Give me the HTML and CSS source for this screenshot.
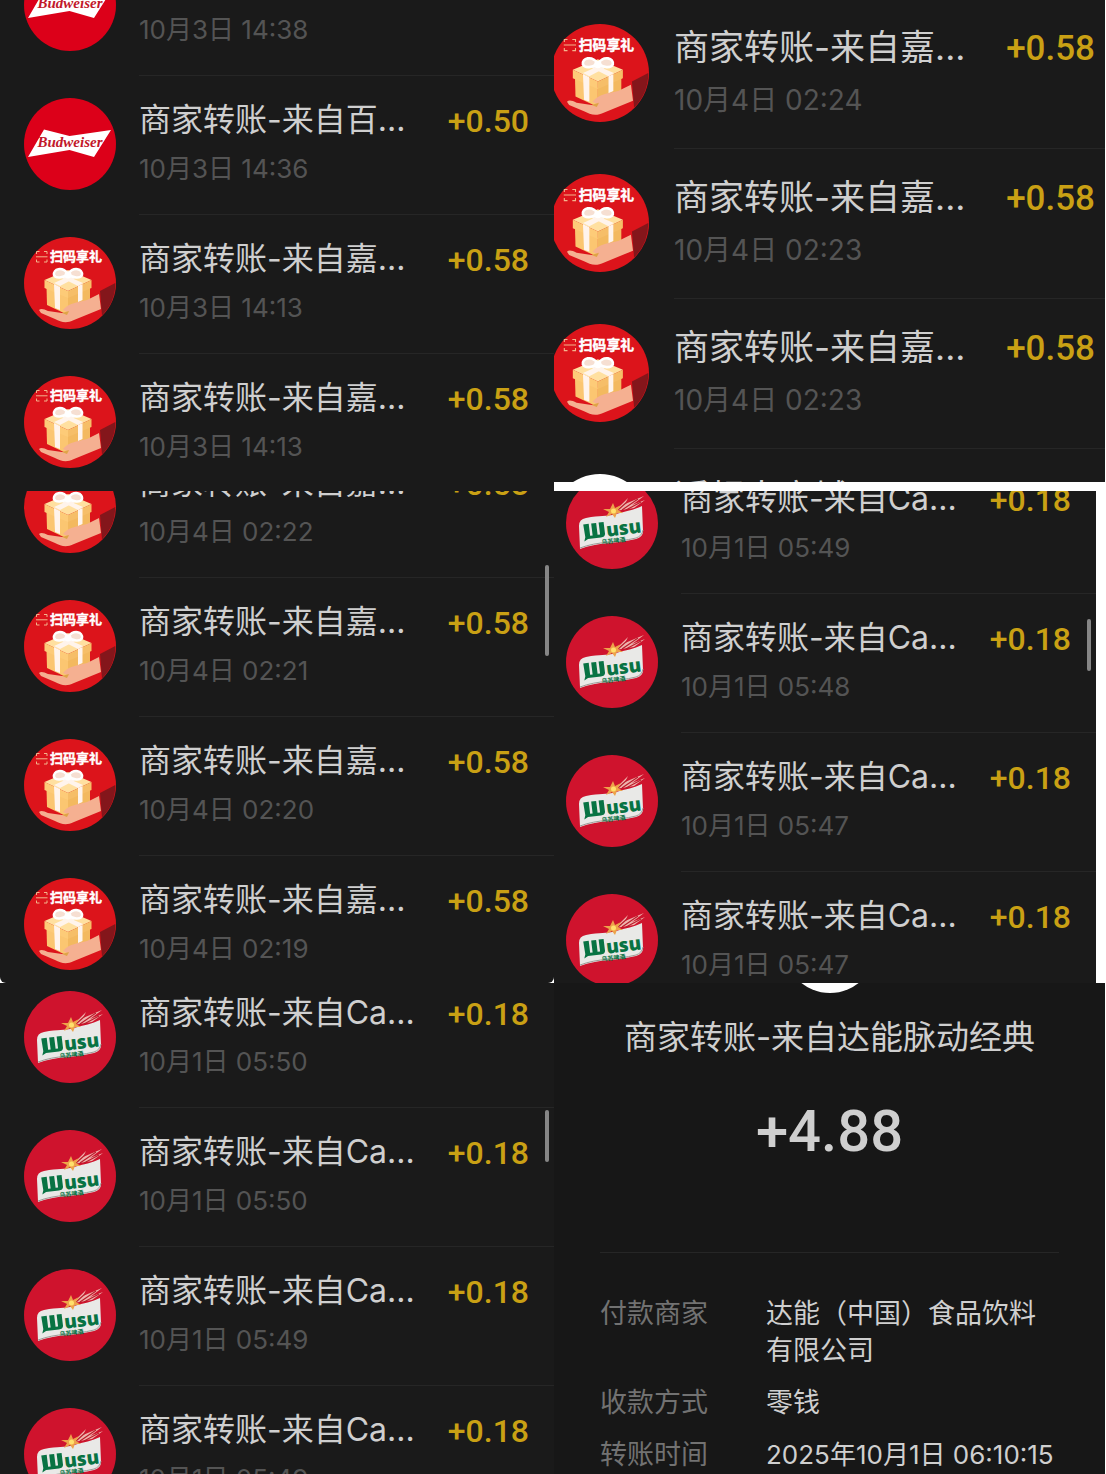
FILE: index.html
```
<!DOCTYPE html>
<html lang="zh-CN">
<head>
<meta charset="utf-8">
<meta name="viewport" content="width=device-width, initial-scale=1">
<title>零钱明细</title>
<link rel="stylesheet" href="styles.css">
</head>
<body>
<svg class="sprite" aria-hidden="true">
  <symbol id="bud" viewBox="0 0 92 92">
    <circle cx="46" cy="46" r="46" fill="#dc0019"/>
    <path d="M4 59 L20 31.500 L45.500 38 L87 32 L70 59 L45.500 52 Z" fill="#fff"/>
    <text class="bud-word" x="46" y="49" text-anchor="middle">Budweiser</text>
  </symbol>
  <symbol id="gift" viewBox="0 0 92 92">
    <circle cx="46" cy="46" r="46" fill="#dc141b"/>
    <path d="M76 54 L91.300 46 A46 46 0 0 1 78 78.500 Z" fill="#84161b"/>
    <path d="M12.500 17V14.500H15.500 M20 14.500H23V17 M12.500 22.500V25H15.500 M20 25H23V22.500 M12 19.800H23.500" fill="none" stroke="#f3b48c" stroke-width="1"/>
    <text class="gift-word" x="52" y="24" text-anchor="middle">扫码享礼</text>
    <path d="M22.500 50 L44 60 V78 L23 68 Z" fill="#fbc671"/>
    <path d="M44 60 L66 50 V67 L44 78 Z" fill="#f3b95f"/>
    <path d="M20.500 43 L44 33 L67.500 43 L44 54 Z" fill="#ffe0a0"/>
    <path d="M20.500 43 L44 54 V61 L20.500 51 Z" fill="#fdcb78"/>
    <path d="M67.500 43 L44 54 V61 L67.500 51 Z" fill="#f6be68"/>
    <path d="M30 47 L36 50 V73 L31 71 Z M54 49 L58.500 47 V63 L54 65 Z" fill="#fff4ec"/>
    <path d="M30 46 L50 37 L55 39 L36 49 Z M34 39 L38 37 L59 46 L54 49 Z" fill="#fff4ec"/>
    <path d="M44 37 C38 29 29 32 30 38 C32 42 39 41 44 37 C50 29 59 32 58 38 C56 42 49 41 44 37 Z" fill="#f6dfd2" stroke="#fff" stroke-width="2.500"/>
    <circle cx="44" cy="38" r="3.500" fill="#fff"/>
    <path d="M15 73 C17 71 20 72 24 74 L38 76 L45 76 L39 73 C44 66 55 65 63 63 L75 57 L77 72 L50 83 C42 87 37 85 31 82 L17 76 Z" fill="#f5b091"/>
    <path d="M38 76 L45 74 L43 78 Z" fill="#dfa447"/>
  </symbol>
  <symbol id="wusu" viewBox="0 0 92 92">
    <circle cx="46" cy="46" r="46" fill="#cf132d"/>
    <path d="M49 34 L62 21 L59 27 L78 19 L66 28 L79 23 L68 31 Z" fill="#efb4ae"/>
    <path d="M52 33 L61 25 M56 33 L72 22 M60 33 L75 25" stroke="#b91d2b" stroke-width="1.200"/>
    <path d="M14 72 L13 49 Q13 42 20 41 C35 38 39 40 50 37 C60 34 68 33 76 29 L77 54 Q77 60 70 62 C50 67 32 65 14 72 Z" fill="#e9e9e7"/>
    <path d="M14 71 C32 64 50 66 70 61 Q76 59 77 53" fill="none" stroke="#9c9c98" stroke-width="1"/>
    <path d="M47 26 L49 31 L55 28 L52 33 L57 36 L51 36 L49 41 L46 37 L40 40 L43 35 L37 32 L44 32 Z" fill="#eda34a"/>
    <circle cx="47.500" cy="34" r="2.500" fill="#ffe06c"/>
    <g transform="rotate(-7 46 52)">
      <path d="M18 44H23.500V56H26V44H31V56H33.500V44H38.500V56Q38 59 34 59H21L17 61L18.500 57Z" fill="#087343"/>
      <text class="wusu-word" x="40" y="59">usu</text>
      <text class="wusu-small" x="46" y="66" text-anchor="middle">乌苏啤酒</text>
    </g>
  </symbol>
</svg>

<main class="collage">
  <section class="panel">
    <ul class="list list-oct3">
      <li class="row"><svg class="avatar"><use href="#bud"/></svg><div class="entry"><div class="info"><p class="name">商家转账-来自百...</p><time class="date">10月3日 14:38</time></div><span class="amount">+0.50</span></div></li>
      <li class="row"><svg class="avatar"><use href="#bud"/></svg><div class="entry"><div class="info"><p class="name">商家转账-来自百...</p><time class="date">10月3日 14:36</time></div><span class="amount">+0.50</span></div></li>
      <li class="row"><svg class="avatar"><use href="#gift"/></svg><div class="entry"><div class="info"><p class="name">商家转账-来自嘉...</p><time class="date">10月3日 14:13</time></div><span class="amount">+0.58</span></div></li>
      <li class="row"><svg class="avatar"><use href="#gift"/></svg><div class="entry"><div class="info"><p class="name">商家转账-来自嘉...</p><time class="date">10月3日 14:13</time></div><span class="amount">+0.58</span></div></li>
    </ul>
  </section>

  <section class="panel panel-footed">
    <ul class="list list-large">
      <li class="row"><svg class="avatar"><use href="#gift"/></svg><div class="entry"><div class="info"><p class="name">商家转账-来自嘉...</p><time class="date">10月4日 02:24</time></div><span class="amount">+0.58</span></div></li>
      <li class="row"><svg class="avatar"><use href="#gift"/></svg><div class="entry"><div class="info"><p class="name">商家转账-来自嘉...</p><time class="date">10月4日 02:23</time></div><span class="amount">+0.58</span></div></li>
      <li class="row"><svg class="avatar"><use href="#gift"/></svg><div class="entry"><div class="info"><p class="name">商家转账-来自嘉...</p><time class="date">10月4日 02:23</time></div><span class="amount">+0.58</span></div></li>
      <li class="row"><span class="avatar avatar-blank"></span><div class="entry"><div class="info"><p class="name">近超大商城</p></div></div></li>
    </ul>
  </section>

  <section class="panel panel-rounded">
    <ul class="list list-oct4">
      <li class="row"><svg class="avatar"><use href="#gift"/></svg><div class="entry"><div class="info"><p class="name">商家转账-来自嘉...</p><time class="date">10月4日 02:22</time></div><span class="amount">+0.58</span></div></li>
      <li class="row"><svg class="avatar"><use href="#gift"/></svg><div class="entry"><div class="info"><p class="name">商家转账-来自嘉...</p><time class="date">10月4日 02:21</time></div><span class="amount">+0.58</span></div></li>
      <li class="row"><svg class="avatar"><use href="#gift"/></svg><div class="entry"><div class="info"><p class="name">商家转账-来自嘉...</p><time class="date">10月4日 02:20</time></div><span class="amount">+0.58</span></div></li>
      <li class="row"><svg class="avatar"><use href="#gift"/></svg><div class="entry"><div class="info"><p class="name">商家转账-来自嘉...</p><time class="date">10月4日 02:19</time></div><span class="amount">+0.58</span></div></li>
    </ul>
    <span class="scrollbar scrollbar-long"></span>
  </section>

  <section class="panel panel-inset">
    <ul class="list list-oct1-early">
      <li class="row"><svg class="avatar"><use href="#wusu"/></svg><div class="entry"><div class="info"><p class="name">商家转账-来自Ca...</p><time class="date">10月1日 05:49</time></div><span class="amount">+0.18</span></div></li>
      <li class="row"><svg class="avatar"><use href="#wusu"/></svg><div class="entry"><div class="info"><p class="name">商家转账-来自Ca...</p><time class="date">10月1日 05:48</time></div><span class="amount">+0.18</span></div></li>
      <li class="row"><svg class="avatar"><use href="#wusu"/></svg><div class="entry"><div class="info"><p class="name">商家转账-来自Ca...</p><time class="date">10月1日 05:47</time></div><span class="amount">+0.18</span></div></li>
      <li class="row"><svg class="avatar"><use href="#wusu"/></svg><div class="entry"><div class="info"><p class="name">商家转账-来自Ca...</p><time class="date">10月1日 05:47</time></div><span class="amount">+0.18</span></div></li>
    </ul>
    <span class="scrollbar"></span>
  </section>

  <section class="panel">
    <ul class="list list-oct1-late">
      <li class="row"><svg class="avatar"><use href="#wusu"/></svg><div class="entry"><div class="info"><p class="name">商家转账-来自Ca...</p><time class="date">10月1日 05:50</time></div><span class="amount">+0.18</span></div></li>
      <li class="row"><svg class="avatar"><use href="#wusu"/></svg><div class="entry"><div class="info"><p class="name">商家转账-来自Ca...</p><time class="date">10月1日 05:50</time></div><span class="amount">+0.18</span></div></li>
      <li class="row"><svg class="avatar"><use href="#wusu"/></svg><div class="entry"><div class="info"><p class="name">商家转账-来自Ca...</p><time class="date">10月1日 05:49</time></div><span class="amount">+0.18</span></div></li>
      <li class="row"><svg class="avatar"><use href="#wusu"/></svg><div class="entry"><div class="info"><p class="name">商家转账-来自Ca...</p><time class="date">10月1日 05:49</time></div><span class="amount">+0.18</span></div></li>
    </ul>
    <span class="scrollbar"></span>
  </section>

  <section class="panel detail">
    <span class="detail-logo"></span>
    <h1 class="detail-title">商家转账-来自达能脉动经典</h1>
    <p class="detail-amount">+4.88</p>
    <dl class="facts">
      <dt>付款商家</dt><dd>达能（中国）食品饮料有限公司</dd>
      <dt>收款方式</dt><dd>零钱</dd>
      <dt>转账时间</dt><dd class="moment">2025年10月1日 06:10:15</dd>
    </dl>
  </section>
</main>
</body>
</html>
```
FILE: styles.css
```
* {
  box-sizing: border-box;
}

body {
  margin: 0;
  background: #fff;
  color: #cfcfcf;
  font-family: Inter, "Noto Sans CJK SC", sans-serif;
}

.sprite {
  display: none;
}

.collage {
  display: grid;
  grid-template-columns: 554fr 551fr;
  grid-template-rows: repeat(3, minmax(0, 1fr));
  aspect-ratio: 1106 / 1474;
  padding-right: 1px;
}

.panel {
  position: relative;
  min-width: 0;
  overflow: hidden;
  background: #1a1a1a;
}

.panel-footed {
  margin-bottom: 9px;
}

.panel-rounded {
  border-radius: 0 0 6px 6px;
}

.panel-inset {
  margin-right: 9px;
}

/* transaction lists, each scrolled to its own position */
.list {
  --row: 139px;
  --avatar: 92px;
  --avatar-top: 22px;
  --gap: 23px;
  --start: 24px;
  --end: 25px;
  --name: 32px;
  --name-line: 48px;
  --date: 26px;
  --date-line: 50px;
  --amount: 32px;
  --amount-line: 50px;
  --top: 20px;
  margin: 0;
  padding: 0;
  list-style: none;
}

.list-large {
  --row: 150px;
  --avatar: 98px;
  --avatar-top: 25px;
  --gap: 25px;
  --start: 0px;
  --end: 10px;
  --name: 35px;
  --name-line: 52px;
  --date: 28px;
  --date-line: 54px;
  --amount: 35px;
  --amount-line: 56px;
  --top: 22px;
  margin: -1px 0 0 -3px;
}

.list-oct3 {
  margin-top: -63px;
}

.list-oct4 {
  margin-top: -52px;
}

.list-oct1-early {
  --start: 12px;
  margin-top: -36px;
}

.list-oct1-late {
  margin-top: -14px;
}

.row {
  display: flex;
  align-items: flex-start;
  gap: var(--gap);
  height: var(--row);
  padding-left: var(--start);
}

.avatar {
  flex: none;
  width: var(--avatar);
  height: var(--avatar);
  margin-top: var(--avatar-top);
}

.avatar-blank {
  border-radius: 50%;
  background: #fff;
}

.entry {
  display: flex;
  flex: 1;
  justify-content: space-between;
  height: 100%;
  padding: var(--top) var(--end) 0 0;
  border-bottom: 1px solid #262626;
  white-space: nowrap;
}

.name {
  margin: 0;
  font-size: var(--name);
  line-height: var(--name-line);
}

.date {
  display: block;
  color: #545454;
  font-size: var(--date);
  line-height: var(--date-line);
}

.amount {
  color: #c9a014;
  font: 500 var(--amount)/var(--amount-line) Roboto, sans-serif;
}

.scrollbar {
  position: absolute;
  top: 26%;
  right: 5px;
  width: 4px;
  height: 52px;
  border-radius: 2px;
  background: #868686;
}

.scrollbar-long {
  top: 15%;
  height: 91px;
}

/* single transfer */
.detail {
  display: flex;
  flex-direction: column;
  align-items: center;
  padding: 0 46px;
  background: #171717;
}

.detail-logo {
  flex: none;
  width: 92px;
  height: 92px;
  margin-top: -82px;
  border-radius: 50%;
  background: #fff;
}

.detail-title {
  margin: 20px 0 0;
  font-size: 33px;
  font-weight: 400;
  line-height: 48px;
  white-space: nowrap;
}

.detail-amount {
  margin: 34px 0 0;
  font: 500 58px/72px Roboto, sans-serif;
}

.facts {
  display: grid;
  grid-template-columns: 108px minmax(0, 1fr);
  gap: 15px 58px;
  align-self: stretch;
  margin: 85px 0 0;
  padding-top: 42px;
  border-top: 1px solid #262626;
  font-size: 27px;
  line-height: 37px;
}

.facts dt {
  color: #727272;
}

.facts dd {
  margin: 0;
}

.facts .moment {
  font-size: 26px;
  white-space: nowrap;
}

/* lettering inside the logos */
.bud-word {
  fill: #c2182b;
  font: italic bold 15px "Liberation Serif", serif;
}

.gift-word {
  fill: #fff;
  stroke: #fff;
  stroke-width: 0.4;
  font: bold 13px "Noto Sans CJK SC", sans-serif;
}

.wusu-word {
  fill: #087343;
  font: 800 19px "Open Sans", sans-serif;
}

.wusu-small {
  fill: #087343;
  font: bold 6px "Noto Sans CJK SC", sans-serif;
}
```
